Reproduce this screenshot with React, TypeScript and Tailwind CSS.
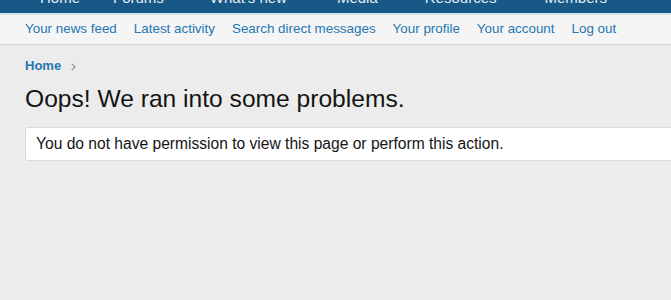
const mainTabs = [
  { label: "Home", gap: "ml-[40px]" },
  { label: "Forums", gap: "ml-[33px]" },
  { label: "What's new", gap: "ml-[46px]" },
  { label: "Media", gap: "ml-[50px]" },
  { label: "Resources", gap: "ml-[47px]" },
  { label: "Members", gap: "ml-[48px]" },
];

const sectionLinks = [
  "Your news feed",
  "Latest activity",
  "Search direct messages",
  "Your profile",
  "Your account",
  "Log out",
];

export default function App() {
  return (
    <div className="min-h-[300px] overflow-hidden bg-[#ececec] font-['Liberation_Sans',Arial,sans-serif] text-[#141414]">
      {/* main nav, only its lower edge is in view */}
      <nav className="h-[13px] overflow-hidden bg-[#185886]">
        <div className="-mt-[10px] flex whitespace-nowrap text-[15px] leading-[15px] text-[#e3ecf4]">
          {mainTabs.map((tab) => (
            <span key={tab.label} className={tab.gap}>
              {tab.label}
            </span>
          ))}
        </div>
      </nav>
      <div className="h-[2px] bg-[#d6e3ee]" />

      {/* section links */}
      <div className="flex h-[30px] items-center gap-[17px] border-b border-[#d8d8d8] bg-[#f5f5f5] pl-[25px] text-[13.4px] text-[#2577b1]">
        {sectionLinks.map((link) => (
          <a key={link} href="#" className="whitespace-nowrap">
            {link}
          </a>
        ))}
      </div>

      <main className="pl-[25px]">
        <div className="mt-[11px] flex h-[20px] items-center gap-[10px] text-[13px]">
          <a href="#" className="font-bold text-[#2577b1]">
            Home
          </a>
          <svg width="5" height="8" viewBox="0 0 5 8" className="mt-[1px]">
            <path d="M0.8 0.8 L4 4 L0.8 7.2" fill="none" stroke="#8c8c8c" strokeWidth="1.1" />
          </svg>
        </div>

        <h1 className="mt-[8px] whitespace-nowrap text-[24.6px] leading-[30px] font-normal">
          Oops! We ran into some problems.
        </h1>

        <div className="-mr-5 mt-[13px] flex h-[34px] items-center rounded-[3px] border border-[#dadada] bg-white pl-[10px] text-[15.6px] whitespace-nowrap">
          You do not have permission to view this page or perform this action.
        </div>
      </main>
    </div>
  );
}
